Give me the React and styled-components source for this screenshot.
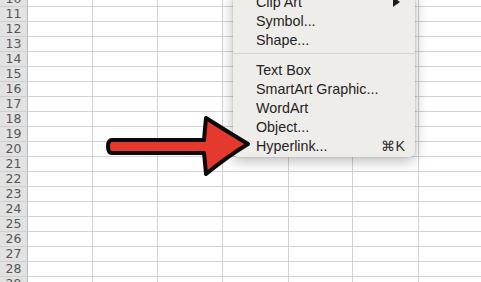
import React from "react"
import styled, { createGlobalStyle } from "styled-components"

const GlobalStyle = createGlobalStyle`
    html, body {
        margin: 0;
        padding: 0;
        background: #ffffff;
        overflow: hidden;
    }
    #root {
        width: 481px;
        height: 282px;
        overflow: hidden;
    }
`

const Screen = styled.div`
    position: relative;
    width: 481px;
    height: 282px;
    overflow: hidden;
    background: #ffffff;
`

const Sheet = styled.div`
    display: flex;
    flex-direction: column;
    margin-top: -8px;
`

const Row = styled.div`
    display: flex;
    height: 15px;
`

const RowHead = styled.div`
    flex: 0 0 28px;
    box-sizing: border-box;
    height: 15px;
    background: #e2e2e2;
    border-right: 1px solid #b9b9b9;
    border-bottom: 1px solid #cfcfcf;
    color: #575757;
    font-family: "DejaVu Sans", "Liberation Sans", sans-serif;
    font-size: 12.5px;
    line-height: 14px;
    text-align: center;
`

const Cell = styled.div`
    flex: 0 0 ${(p) => p.$w}px;
    box-sizing: border-box;
    height: 15px;
    border-right: 1px solid #d2d2d2;
    border-bottom: 1px solid #d2d2d2;
`

const Menu = styled.div`
    position: absolute;
    left: 233px;
    top: -8px;
    width: 182px;
    box-sizing: border-box;
    padding: 0 0 2px;
    background: #efede9;
    border-radius: 0 0 5px 5px;
    box-shadow: 0 4px 14px rgba(0, 0, 0, 0.28), 0 0 0 1px rgba(0, 0, 0, 0.06);
    font-family: "Liberation Sans", Arial, sans-serif;
    font-size: 14.3px;
    color: #242424;
`

const Item = styled.div`
    display: flex;
    justify-content: space-between;
    align-items: center;
    height: 19px;
    padding: 0 10px 0 23px;
`

const Shortcut = styled.span`
    color: #2a2a2a;
`

const SubArrow = styled.span`
    width: 0;
    height: 0;
    border-top: 5px solid transparent;
    border-bottom: 5px solid transparent;
    border-left: 7px solid #1e1e1e;
    margin-right: 5px;
`

const Separator = styled.div`
    height: 1px;
    margin: 4px 0 6px;
    background: #d6d4d0;
`

const Pointer = styled.svg`
    position: absolute;
    left: 100px;
    top: 110px;
    width: 160px;
    height: 72px;
`

const cols = [65, 65, 65, 66, 64, 66, 65]
const rows = Array.from({ length: 20 }, (_, i) => 10 + i)

const App = () => {
    return (
        <Screen>
            <GlobalStyle />
            <Sheet>
                {rows.map((n) => (
                    <Row key={n}>
                        <RowHead>{n}</RowHead>
                        {cols.map((w, i) => (
                            <Cell key={i} $w={w} />
                        ))}
                    </Row>
                ))}
            </Sheet>
            <Menu>
                <Item>
                    <span>Clip Art</span>
                    <SubArrow />
                </Item>
                <Item>Symbol...</Item>
                <Item>Shape...</Item>
                <Separator />
                <Item>Text Box</Item>
                <Item>SmartArt Graphic...</Item>
                <Item>WordArt</Item>
                <Item>Object...</Item>
                <Item>
                    <span>Hyperlink...</span>
                    <Shortcut>⌘K</Shortcut>
                </Item>
            </Menu>
            <Pointer viewBox="0 0 160 72">
                <path
                    d="M12 30 L104 30 Q105 18 106 8 Q128 22 148 34 Q128 46 106 64 Q105 52 104 43 L12 43 Q8 43 8 36.5 Q8 30 12 30 Z"
                    fill="#e5392e"
                    stroke="#0a0a0a"
                    strokeWidth="4"
                    strokeLinejoin="round"
                />
            </Pointer>
        </Screen>
    )
}

export default App
